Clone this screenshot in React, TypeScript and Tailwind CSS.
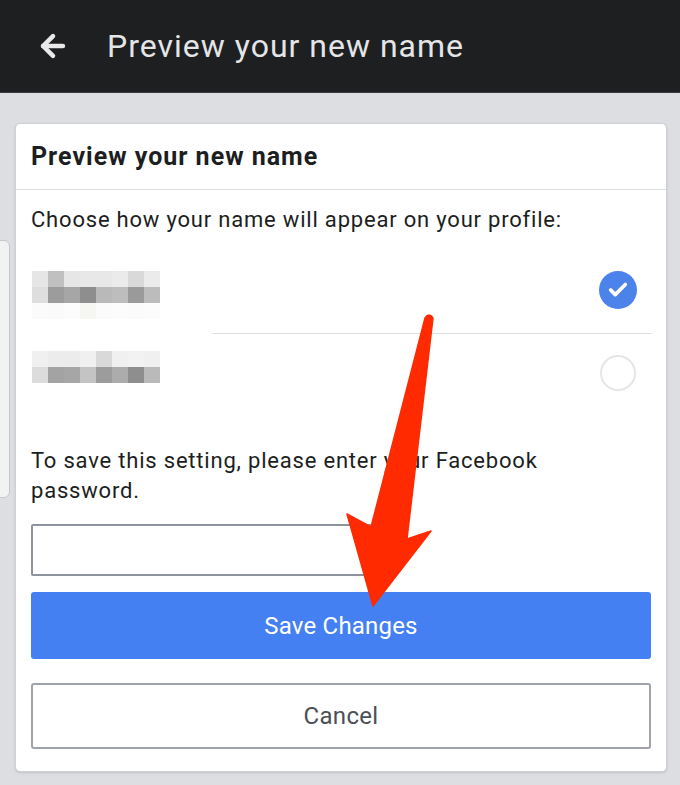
import React from "react";
import { ArrowLeft, Check } from "lucide-react";

const nameOne = [
  ["bg-[#e6e6e6]", "bg-[#c0c0c0]", "bg-[#e6e6e6]", "bg-[#e8e8e8]", "bg-[#e8e8e8]", "bg-[#ebebeb]", "bg-[#d9d9d9]", "bg-[#ebebeb]"],
  ["bg-[#dedede]", "bg-[#9c9c9c]", "bg-[#a6a6a6]", "bg-[#8e8e8e]", "bg-[#b9b9b9]", "bg-[#bdbdbd]", "bg-[#9a9a9a]", "bg-[#bcbcbc]"],
  ["bg-[#fbfbfb]", "bg-[#fafafa]", "bg-[#fcfcfc]", "bg-[#f6f6f2]", "bg-[#fbfbfb]", "bg-[#fcfcfc]", "bg-[#fbfbfb]", "bg-[#fcfcfc]"],
];

const nameTwo = [
  ["bg-[#f0f0f0]", "bg-[#ececec]", "bg-[#ececec]", "bg-[#f0f0f0]", "bg-[#d9d9d9]", "bg-[#f0f0f0]", "bg-[#f2f2f2]", "bg-[#f0f0f0]"],
  ["bg-[#dcdcdc]", "bg-[#a3a3a3]", "bg-[#a6a6a6]", "bg-[#c4c4c4]", "bg-[#9c9c9c]", "bg-[#acacac]", "bg-[#8e8e8e]", "bg-[#bababa]"],
];

const BlurredName = ({ rows }: { rows: string[][] }) => (
  <div className="flex flex-col blur-[0.6px]">
    {rows.map((row, r) => (
      <div key={r} className="flex">
        {row.map((c, i) => (
          <div key={i} className={`h-4 w-4 ${c}`} />
        ))}
      </div>
    ))}
  </div>
);

const RedArrow = () => (
  <svg className="absolute left-0 top-0 pointer-events-none" width="680" height="785" viewBox="0 0 680 785">
    <path
      d="M425 318 Q429 312 433 318 L407 539 L431 531 L373 606 L347 514 L371 527 Z"
      fill="#ff2a00"
      stroke="#ff2a00"
      strokeWidth="1.5"
      strokeLinejoin="round"
    />
  </svg>
);

export default function App() {
  return (
    <div
      className="relative w-[680px] h-[785px] overflow-hidden bg-[#dcdee2]"
      style={{ fontFamily: "Roboto, 'Liberation Sans', sans-serif" }}
    >
      <header className="flex items-center h-[93px] bg-[#1e1f21] border-b border-[#3a3b3d]">
        <ArrowLeft className="ml-[36px] text-[#e9e9e9]" size={34} strokeWidth={3.2} />
        <h1 className="ml-[37px] text-[32px] text-[#e4e5e7] tracking-[1px]">Preview your new name</h1>
      </header>

      <div className="absolute left-[-6px] top-[240px] w-[16px] h-[258px] rounded-[6px] bg-[#f2f2f3] border border-[#c4c7cc]" />

      <main className="ml-[15px] mr-[13px] mt-[30px] bg-white rounded-[5px] border border-[#cdd0d5] shadow-sm">
        <div className="h-[66px] flex items-center px-[15px] border-b border-[#dcdde0]">
          <h2 className="text-[25px] font-bold text-[#1c1e21] tracking-[1px]">Preview your new name</h2>
        </div>

        <div className="px-[15px]">
          <p className="mt-[16px] text-[22px] leading-[28px] text-[#1c1e21] tracking-[0.8px]">
            Choose how your name will appear on your profile:
          </p>

          <div className="mt-[13px] h-[86px] flex items-center justify-between">
            <div className="ml-[1px] mt-[10px]">
              <BlurredName rows={nameOne} />
            </div>
            <div className="mr-[14px] flex items-center justify-center w-[38px] h-[38px] rounded-full bg-[#4b83ea]">
              <Check className="text-white" size={22} strokeWidth={4} />
            </div>
          </div>
          <div className="ml-[182px] border-t border-[#dcdde0]" />

          <div className="h-[78px] flex items-center justify-between">
            <div className="ml-[1px] mt-[-12px]">
              <BlurredName rows={nameTwo} />
            </div>
            <div className="mr-[15px] w-[36px] h-[36px] rounded-full border-2 border-[#e6e6e7]" />
          </div>

          <p className="mt-[34px] text-[22px] leading-[30px] text-[#1c1e21] tracking-[0.8px]">
            To save this setting, please enter your Facebook password.
          </p>

          <div className="mt-[18px] w-[345px] h-[52px] border-2 border-[#8d949e] rounded-[2px]" />

          <button className="block mt-[16px] w-full h-[67px] rounded-[3px] bg-[#4480f2] text-white text-[24px] tracking-[0.2px]">
            Save Changes
          </button>

          <button className="block mt-[24px] mb-[22px] w-full h-[66px] rounded-[3px] bg-white border-2 border-[#a0a4aa] text-[#4b4f56] text-[24px] tracking-[0.3px]">
            Cancel
          </button>
        </div>
      </main>

      <RedArrow />
    </div>
  );
}
